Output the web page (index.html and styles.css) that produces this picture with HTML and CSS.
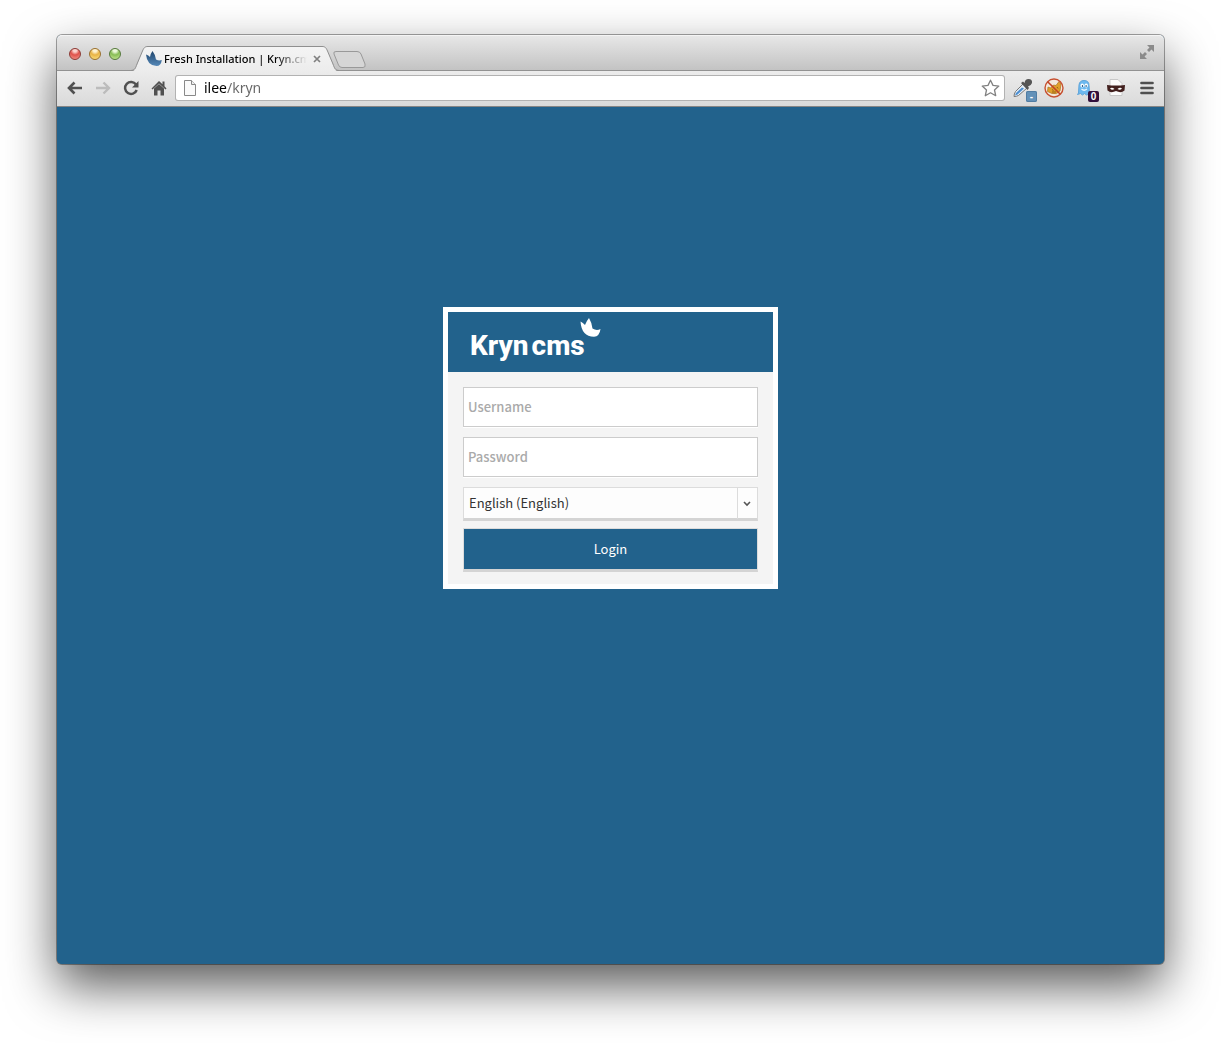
FILE: index.html
```html
<!DOCTYPE html>
<html lang="en">
<head>
<meta charset="utf-8">
<title>Fresh Installation | Kryn.cms</title>
<link rel="stylesheet" href="styles.css">
</head>
<body>
<div class="window">
  <header class="titlebar">
    <div class="lights">
      <button class="light light-close" aria-label="Close window"></button>
      <button class="light light-minimize" aria-label="Minimize window"></button>
      <button class="light light-zoom" aria-label="Zoom window"></button>
    </div>
    <div class="tab">
      <svg class="tab-shape" width="208" height="26" viewBox="0 0 208 26" aria-hidden="true">
        <defs><linearGradient id="tabfill" x1="0" y1="0" x2="0" y2="1"><stop offset="0" stop-color="#f4f4f4"/><stop offset="1" stop-color="#ececec"/></linearGradient></defs>
        <path d="M0 25.500C4 25 4.500 23 6 19L11.500 5C13 1.500 14 .5 17 .5H191C194 .5 195 1.500 196.500 5L202 19C203.500 23 204 25 208 25.500V26H0Z" fill="url(#tabfill)"/>
        <path d="M0 24.500C4 24 4.500 22 6 18L11.500 5C13 1.500 14 .5 17 .5H191C194 .5 195 1.500 196.500 5L202 18C203.500 22 204 24 208 24.500" fill="none" stroke="#8f8f8f"/>
      </svg>
      <svg class="favicon" width="16" height="16" viewBox="0 0 16 16" aria-hidden="true">
        <defs><linearGradient id="fav" x1="0" y1="0" x2="0" y2="1"><stop offset="0" stop-color="#1f456c"/><stop offset="1" stop-color="#5588b8"/></linearGradient></defs>
        <path d="M0 3.500Q2.500 4 4 6Q4.500 2.500 6.500 0Q9 3 10 8.500Q13 10 15.800 9Q15 15 10.500 15Q1 14.500 0 3.500Z" fill="url(#fav)"/>
      </svg>
      <span class="tab-title">Fresh Installation | Kryn.cms</span>
      <button class="tab-close" aria-label="Close tab"><svg width="8" height="8" viewBox="0 0 8 8"><path d="M1 1L7 7M7 1L1 7" stroke="#808080" stroke-width="1.700"/></svg></button>
    </div>
    <button class="new-tab" aria-label="New tab"><svg width="34" height="17" viewBox="0 0 34 17"><path d="M3 .5H24Q27 .5 28 3L32 13Q33 16.500 30 16.500H9Q6.500 16.500 5.500 14L1 3Q0 .5 3 .5Z" fill="#d6d6d6" stroke="#999"/></svg></button>
    <button class="fullscreen" aria-label="Full screen"><svg width="16" height="16" viewBox="0 0 16 16"><path d="M8 1H15V8L12.500 5.500L10 8L8 6L10.500 3.500ZM1 8L3.500 10.500L6 8L8 10L5.500 12.500L8 15H1Z" fill="#8b8b8b"/></svg></button>
  </header>

  <nav class="toolbar">
    <div class="nav-buttons">
      <button class="nav-button" aria-label="Back"><svg width="16" height="16" viewBox="0 0 16 16"><path d="M15 8H3M7.500 2.500L2 8L7.500 13.500" fill="none" stroke="#505050" stroke-width="2.600"/></svg></button>
      <button class="nav-button" aria-label="Forward"><svg width="16" height="16" viewBox="0 0 16 16"><path d="M1 8H13M8.500 2.500L14 8L8.500 13.500" fill="none" stroke="#bcbcbc" stroke-width="2.400"/></svg></button>
      <button class="nav-button" aria-label="Reload"><svg width="16" height="16" viewBox="0 0 16 16"><path d="M13 4.500A6 6 0 1 0 13.700 10" fill="none" stroke="#505050" stroke-width="2.500"/><path d="M15.500 1V7.500H9Z" fill="#505050"/></svg></button>
      <button class="nav-button" aria-label="Home"><svg width="16" height="16" viewBox="0 0 16 16"><path d="M8 1L.5 8.500L1.500 9.500L8 3.500L14.500 9.500L15.500 8.500L13.500 6.300V1.500H11.500V4.300Z" fill="#505050"/><path d="M8 4L3 8.600V15.500H6.500V10.500H9.500V15.500H13V8.600Z" fill="#505050"/></svg></button>
    </div>
    <div class="address">
      <svg width="12" height="16" viewBox="0 0 12 16" aria-hidden="true"><path d="M.5 .5H7.500L11.500 4.500V15.500H.5Z" fill="#fafafa" stroke="#888"/><path d="M7.500 .5V4.500H11.500" fill="#eee" stroke="#888"/></svg>
      <input class="address-input" type="text" value="ilee/kryn" aria-label="Address">
      <button class="star" aria-label="Bookmark this page"><svg width="19" height="18" viewBox="0 0 19 18"><path d="M9.500 1.200L12 6.400L17.800 7.100L13.500 11L14.700 16.700L9.500 13.800L4.300 16.700L5.500 11L1.200 7.100L7 6.400Z" fill="#fff" stroke="#808080" stroke-width="1.300" stroke-linejoin="round"/></svg></button>
    </div>
    <div class="extensions">
      <button class="extension" aria-label="Color picker">
        <svg width="20" height="20" viewBox="0 0 20 20"><path d="M10 6L14 10L5.500 17.500Q3.500 18.500 1 18.500Q1 16 2.500 13.500Z" fill="#e4edf5" stroke="#777"/><path d="M9 9.500L11 10.500L4.500 16.500L2 17.500L3 15Z" fill="#4c8ed1"/><path d="M8 5L10 3.500L11.500 5Q12 1 15.500 1Q19.500 1 19 5Q18 8 15 8.500L16 10L14.500 12Z" fill="#555"/></svg>
        <span class="badge badge-blue">-</span>
      </button>
      <button class="extension" aria-label="Blocker">
        <svg width="20" height="20" viewBox="0 0 20 20"><circle cx="10" cy="10" r="8.500" fill="#f3e8dc"/><path d="M4 9L6.500 10L9.500 7L12 7.500L15 3.500L17 6L16 13Q13 17 8 15.500L3.500 13.500Z" fill="#e0a02a" stroke="#a87325" stroke-width=".7"/><path d="M8 11.500L9.500 12.500M13 9L14 10.500M8 14H12" stroke="#936018"/><circle cx="10" cy="10" r="9" fill="none" stroke="#c75030" stroke-width="1.400"/><path d="M3.700 3.700L16.300 16.300" stroke="#c04227" stroke-width="1.600"/></svg>
      </button>
      <button class="extension" aria-label="Ghost">
        <svg width="20" height="20" viewBox="0 0 20 20"><path d="M3.500 15L4 7Q4.500 2.500 9 2.500Q14 2.500 14 7.500L14.500 16L11.500 17L9.500 15.500L7.500 17L5.500 15.500L2.500 16.500Z" fill="#6db9f0" stroke="#5fa5da"/><ellipse cx="7.200" cy="7.500" rx="1.700" ry="2" fill="#fff"/><ellipse cx="11.200" cy="7.500" rx="1.700" ry="2" fill="#fff"/><path d="M7.400 7V9M11.100 7V9" stroke="#23527b"/><path d="M6.500 11Q9 13.500 12 11" fill="none" stroke="#e9f6ff" stroke-width="1.300"/></svg>
        <span class="badge badge-plum">0</span>
      </button>
      <button class="extension" aria-label="Mask">
        <svg width="20" height="20" viewBox="0 0 20 20"><path d="M4 1.500H12L16 5.500V17.500H4Z" fill="#fcfcfc" stroke="#c8c8c8"/><path d="M1 7Q10 8 19 7L18.500 12.500Q15 15.500 10 13Q5 15.500 1.500 12.500Z" fill="#42201e"/><path d="M4 10.500Q6 9 8.500 11Q6 12.800 4 10.500ZM16 10.500Q14 9 11.500 11Q14 12.800 16 10.500Z" fill="#fff"/></svg>
      </button>
      <button class="extension" aria-label="Menu">
        <svg width="14" height="14" viewBox="0 0 14 14"><path d="M1.500 2H12.500M1.500 7H12.500M1.500 12H12.500" stroke="#505050" stroke-width="2.700" stroke-linecap="round"/></svg>
      </button>
    </div>
  </nav>

  <main class="page">
    <form class="login">
      <h1 class="login-header">
        <span class="wordmark">Kryn</span><span class="wordmark">cms</span>
        <svg class="bird" width="22" height="20" viewBox="0 0 22 20" aria-hidden="true"><path d="M.5 3.500Q3 4.500 5 7Q6.500 3 9 0Q11.500 4 12.500 10.500Q16.500 13 20.500 11Q19.500 18.500 14 18.800Q1.500 18.500 .5 3.500Z" fill="#fff"/></svg>
      </h1>
      <div class="login-body">
        <input class="field" type="text" placeholder="Username" aria-label="Username">
        <input class="field" type="password" placeholder="Password" aria-label="Password">
        <div class="language">
          <select class="language-select" aria-label="Language"><option>English (English)</option></select>
          <svg class="chevron" width="20" height="31" viewBox="0 0 20 31" aria-hidden="true"><path d="M.5 0V31" stroke="#dcdcdc"/><path d="M7 14L10 17L13 14" fill="none" stroke="#555" stroke-width="1.600"/></svg>
        </div>
        <button class="submit" type="button">Login</button>
      </div>
    </form>
  </main>
</div>
</body>
</html>
```
FILE: styles.css
```css
* { box-sizing: border-box; }

body {
  margin: 0;
  min-height: 100vh;
  padding: 35px 57px 79px;
  display: flex;
  background: #fff;
  font-family: "Noto Sans", "Open Sans", sans-serif;
}

button {
  display: flex;
  align-items: center;
  justify-content: center;
  padding: 0;
  border: 0;
  background: none;
}

.window {
  flex: 1;
  min-width: 0;
  display: flex;
  flex-direction: column;
  border-radius: 5px;
  background: #22628c;
  box-shadow: 0 0 0 1px rgba(0, 0, 0, .35), 0 22px 50px rgba(0, 0, 0, .65);
}

.titlebar {
  display: flex;
  align-items: flex-end;
  height: 36px;
  border-bottom: 1px solid #929292;
  border-radius: 5px 5px 0 0;
  background: linear-gradient(#e8e8e8, #c3c3c3);
  box-shadow: inset 0 1px #f4f4f4;
}

.lights {
  display: flex;
  gap: 8px;
  padding: 0 10px 10px 12px;
}

.light {
  width: 12px;
  height: 12px;
  border: 1px solid;
  border-radius: 50%;
}

.light-close {
  border-color: #8c3a35;
  background: radial-gradient(circle at 50% 15%, #fbd5cf 0 15%, #e0524b 45%, #f39a8e);
}

.light-minimize {
  border-color: #9a702d;
  background: radial-gradient(circle at 50% 15%, #fff3d2 0 15%, #e9b345 45%, #fde587);
}

.light-zoom {
  border-color: #55793b;
  background: radial-gradient(circle at 50% 15%, #eef9dd 0 15%, #88bd55 45%, #cdec9a);
}

.tab {
  position: relative;
  display: flex;
  align-items: center;
  width: 208px;
  height: 26px;
  margin-bottom: -2px;
  padding: 0 14px 0 15px;
}

.tab-shape {
  position: absolute;
  left: 0;
  top: 0;
}

.favicon,
.tab-title,
.tab-close { position: relative; }

.favicon { flex: none; }

.tab-title {
  flex: 1;
  margin-left: 2px;
  overflow: hidden;
  white-space: nowrap;
  font-size: 11px;
  font-weight: 500;
  line-height: 16px;
  color: #000;
  mask-image: linear-gradient(to right, #000 calc(100% - 32px), transparent);
}

.tab-close {
  width: 16px;
  height: 16px;
  margin-left: 2px;
}

.new-tab { margin: 0 auto 2px -6px; }

.fullscreen { margin: 0 9px 10px 0; }

.toolbar {
  display: flex;
  align-items: center;
  height: 36px;
  padding: 0 2px 1px 4px;
  border-bottom: 1px solid #858585;
  background: linear-gradient(#ececec, #dadada);
}

.nav-buttons,
.extensions {
  display: flex;
  flex: none;
}

.nav-button {
  width: 28px;
  height: 28px;
}

.address {
  flex: 1;
  min-width: 0;
  display: flex;
  align-items: center;
  height: 24px;
  margin: 0 3px;
  padding: 0 4px 0 8px;
  border-radius: 2px;
  background: #fff;
  box-shadow: 0 0 0 1px #b2b2b2;
}

.address-input {
  flex: 1;
  min-width: 0;
  height: 24px;
  margin-left: 8px;
  padding: 0;
  border: 0;
  outline: 0;
  font: 14px/24px "Noto Sans", "Open Sans", sans-serif;
  color: transparent;
  background: linear-gradient(to right, #000 23px, #666 23px);
  background-clip: text;
}

.extension {
  position: relative;
  width: 31px;
  height: 28px;
}

.badge {
  position: absolute;
  right: 1px;
  bottom: 0;
  width: 11px;
  height: 11px;
  border-radius: 2px;
  font: bold 10px/11px "Liberation Sans", sans-serif;
  color: #fff;
}

.badge-blue {
  background: #6391b8;
  box-shadow: inset 0 0 0 1px #517ca2;
}

.badge-plum { background: #32103c; }

.page {
  flex: 1;
  padding: 200px 20px 40px;
  border-radius: 0 0 5px 5px;
  background: #22628c;
}

.login {
  width: 335px;
  max-width: 100%;
  margin: 0 auto;
  border: 5px solid #fff;
  background: #f4f4f4;
  font-family: "Noto Sans CJK JP", sans-serif;
}

.login-header {
  display: flex;
  gap: 3px;
  height: 60px;
  margin: 0;
  padding: 16px 22px 0;
  background: #22628c;
  color: #fff;
}

.wordmark {
  font: 800 28px/36px Roboto, sans-serif;
}

.bird {
  margin: -10px 0 0 -8px;
}

.login-body {
  display: flex;
  flex-direction: column;
  padding: 15px 15px 12px;
}

.field {
  height: 40px;
  margin: 0 0 10px;
  padding: 0 4px 2px;
  border: 1px solid #ccc;
  background: #fff;
  box-shadow: 0 1px #fff;
  font: 500 13px/20px "Noto Sans CJK JP", sans-serif;
  color: #333;
}

.field::placeholder { color: #aaa; }

.language {
  position: relative;
  margin-bottom: 7px;
}

.language-select {
  display: block;
  width: 100%;
  height: 34px;
  padding: 0 26px 0 5px;
  border: 1px solid #dcdcdc;
  border-bottom: 3px solid #d4d4d4;
  border-radius: 0;
  background: #fdfdfd;
  appearance: none;
  font: 13px/20px "Noto Sans CJK JP", sans-serif;
  color: #333;
}

.chevron {
  position: absolute;
  top: 1px;
  right: 1px;
  pointer-events: none;
}

.submit {
  height: 44px;
  border: 1px solid #dcdcdc;
  border-bottom: 3px solid #d4d4d4;
  background: #22628c;
  font: 13px/20px "Noto Sans CJK JP", sans-serif;
  color: #fff;
}
```
